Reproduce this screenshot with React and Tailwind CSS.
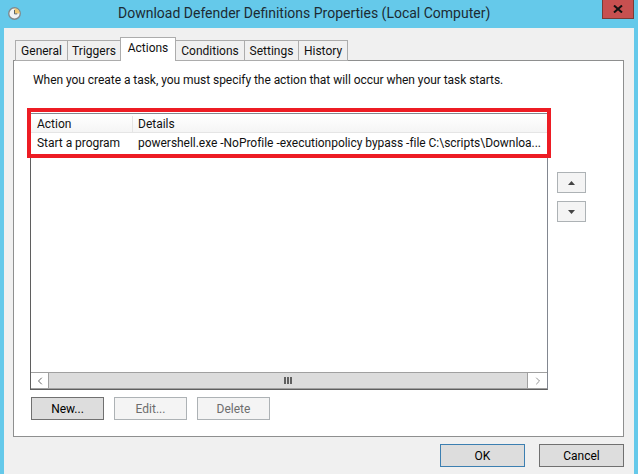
import { ChevronLeft, ChevronRight } from 'lucide-react';

const tabs = [
  { name: 'General', w: 'w-[53px]' },
  { name: 'Triggers', w: 'w-[54px]' },
  { name: 'Actions', w: 'w-[56px]', active: true },
  { name: 'Conditions', w: 'w-[70px]' },
  { name: 'Settings', w: 'w-[55px]' },
  { name: 'History', w: 'w-[50px]' },
];

function ClockIcon() {
  return (
    <svg width="13" height="13" viewBox="0 0 14 14" className="-mt-[2px] shrink-0">
      <circle cx="7" cy="7" r="6.2" fill="#f1f3f4" stroke="#7f888d" strokeWidth="1.5" />
      <path d="M7 7V1.4A5.6 5.6 0 0 1 12.6 7Z" fill="#efc873" />
      <path d="M7 3.2V7.4H10" fill="none" stroke="#4f5a60" strokeWidth="1" />
    </svg>
  );
}

function Btn({ children, disabled, primary, wide }) {
  const look = disabled
    ? 'border-[#adb2b5] bg-[#f4f4f4] text-[#6d6d6d]'
    : primary
      ? 'border-[#3c7fb1] bg-[#dddddd] text-black'
      : 'border-[#707070] bg-[#dddddd] text-black';
  return (
    <button className={`h-[23px] border text-xs ${wide ? 'w-[85px]' : 'w-[73px]'} ${look}`}>
      {children}
    </button>
  );
}

function MoveBtn({ down }) {
  return (
    <button className="flex h-[21px] w-[29px] items-center justify-center border border-[#adb2b5] bg-[#f4f4f4]">
      <svg width="7" height="4" viewBox="0 0 7 4">
        <path d={down ? 'M0 0H7L3.5 4Z' : 'M0 4H7L3.5 0Z'} fill="#444" />
      </svg>
    </button>
  );
}

export default function App() {
  return (
    <div className="flex h-[474px] w-[638px] flex-col overflow-hidden bg-[#65c9ea] px-1 font-['Roboto',sans-serif] text-xs text-[#111]">
      {/* title bar */}
      <div className="relative flex h-7 shrink-0 items-center pl-[4px]">
        <ClockIcon />
        <span className="ml-[97px] pb-[2px] text-[14px] whitespace-nowrap text-[#1c2b33]">
          Download Defender Definitions Properties (Local Computer)
        </span>
        <button className="absolute top-0 right-0 flex h-[19px] w-8 items-center justify-center border-x border-b border-[#7a3b36] bg-[#c75050]">
          <svg width="10" height="8" viewBox="0 0 10 8">
            <path d="M1 0.5L9 7.5M9 0.5L1 7.5" stroke="#111" strokeWidth="2" />
          </svg>
        </button>
      </div>

      <div className="flex min-h-0 flex-1 flex-col bg-[#f0f0f0] pt-[9px] pr-[10px] pl-[9px]">
        {/* tabs */}
        <div className="relative z-10 flex h-[23px] shrink-0 items-start pl-[2px]">
          {tabs.map(t => (
            <div
              key={t.name}
              className={`flex items-center justify-center border border-[#acacac] first:ml-0 -ml-px ${t.w} ${t.active ? 'relative z-10 h-[24px] border-b-0 bg-white pb-[3px]' : 'mt-[3px] h-[21px] bg-[#f0f0f0]'}`}
            >
              {t.name}
            </div>
          ))}
        </div>

        {/* tab page */}
        <div className="flex h-[377px] shrink-0 flex-col border border-[#8e8f8f] bg-white pl-[16px]">
          <p className="mt-[11px] ml-[3px] h-[17px] leading-[17px] tracking-[-0.045px] whitespace-nowrap">
            When you create a task, you must specify the action that will occur when your task starts.
          </p>
          <div className="mt-[24px] flex items-start">
            <div className="relative flex h-[277px] w-[518px] shrink-0 flex-col border border-[#828790] border-b-[#5f5f5f] border-l-[#5f5f5f]">
              {/* red highlight drawn over the list */}
              <div className="pointer-events-none absolute -top-[6px] -left-[4px] h-[50px] w-[524px] border-[4px] border-[#ed1c24]" />
              <div className="flex h-[19px] shrink-0 items-center border-b border-[#e5e5e5] bg-gradient-to-b from-white to-[#f5f5f5] pt-px">
                <div className="w-[102px] border-r border-[#e5e5e5] pl-[6px]">Action</div>
                <div className="pl-[5px]">Details</div>
              </div>
              <div className="flex h-[20px] shrink-0 items-center tracking-[-0.03px]">
                <div className="w-[102px] pl-[6px] whitespace-nowrap">Start a program</div>
                <div className="pl-[5px] whitespace-nowrap">powershell.exe -NoProfile -executionpolicy bypass -file C:\scripts\Downloa...</div>
              </div>
              <div className="flex-1" />
              {/* horizontal scrollbar */}
              <div className="flex h-[17px] shrink-0 border-y border-[#a0a0a0]">
                <div className="flex w-[17px] items-center justify-center bg-white">
                  <ChevronLeft size={12} strokeWidth={1.5} color="#333333" />
                </div>
                <div className="flex flex-1 items-center justify-center border-x border-[#a0a0a0] bg-[#dcdcdc]">
                  <div className="h-[7px] w-[8px] bg-[repeating-linear-gradient(90deg,#606060_0,#606060_2px,transparent_2px,transparent_3px)]" />
                </div>
                <div className="flex w-[19px] items-center justify-center bg-white">
                  <ChevronRight size={12} strokeWidth={1.5} color="#707070" />
                </div>
              </div>
            </div>
            <div className="mt-[59px] ml-[9px] flex flex-col gap-[8px]">
              <MoveBtn />
              <MoveBtn down />
            </div>
          </div>
          <div className="mt-[7px] ml-px flex gap-[10px]">
            <Btn>New...</Btn>
            <Btn disabled>Edit...</Btn>
            <Btn disabled>Delete</Btn>
          </div>
        </div>

        {/* dialog buttons */}
        <div className="mt-[7px] flex justify-end gap-[14px]">
          <Btn wide primary>OK</Btn>
          <Btn wide>Cancel</Btn>
        </div>
      </div>
    </div>
  );
}
